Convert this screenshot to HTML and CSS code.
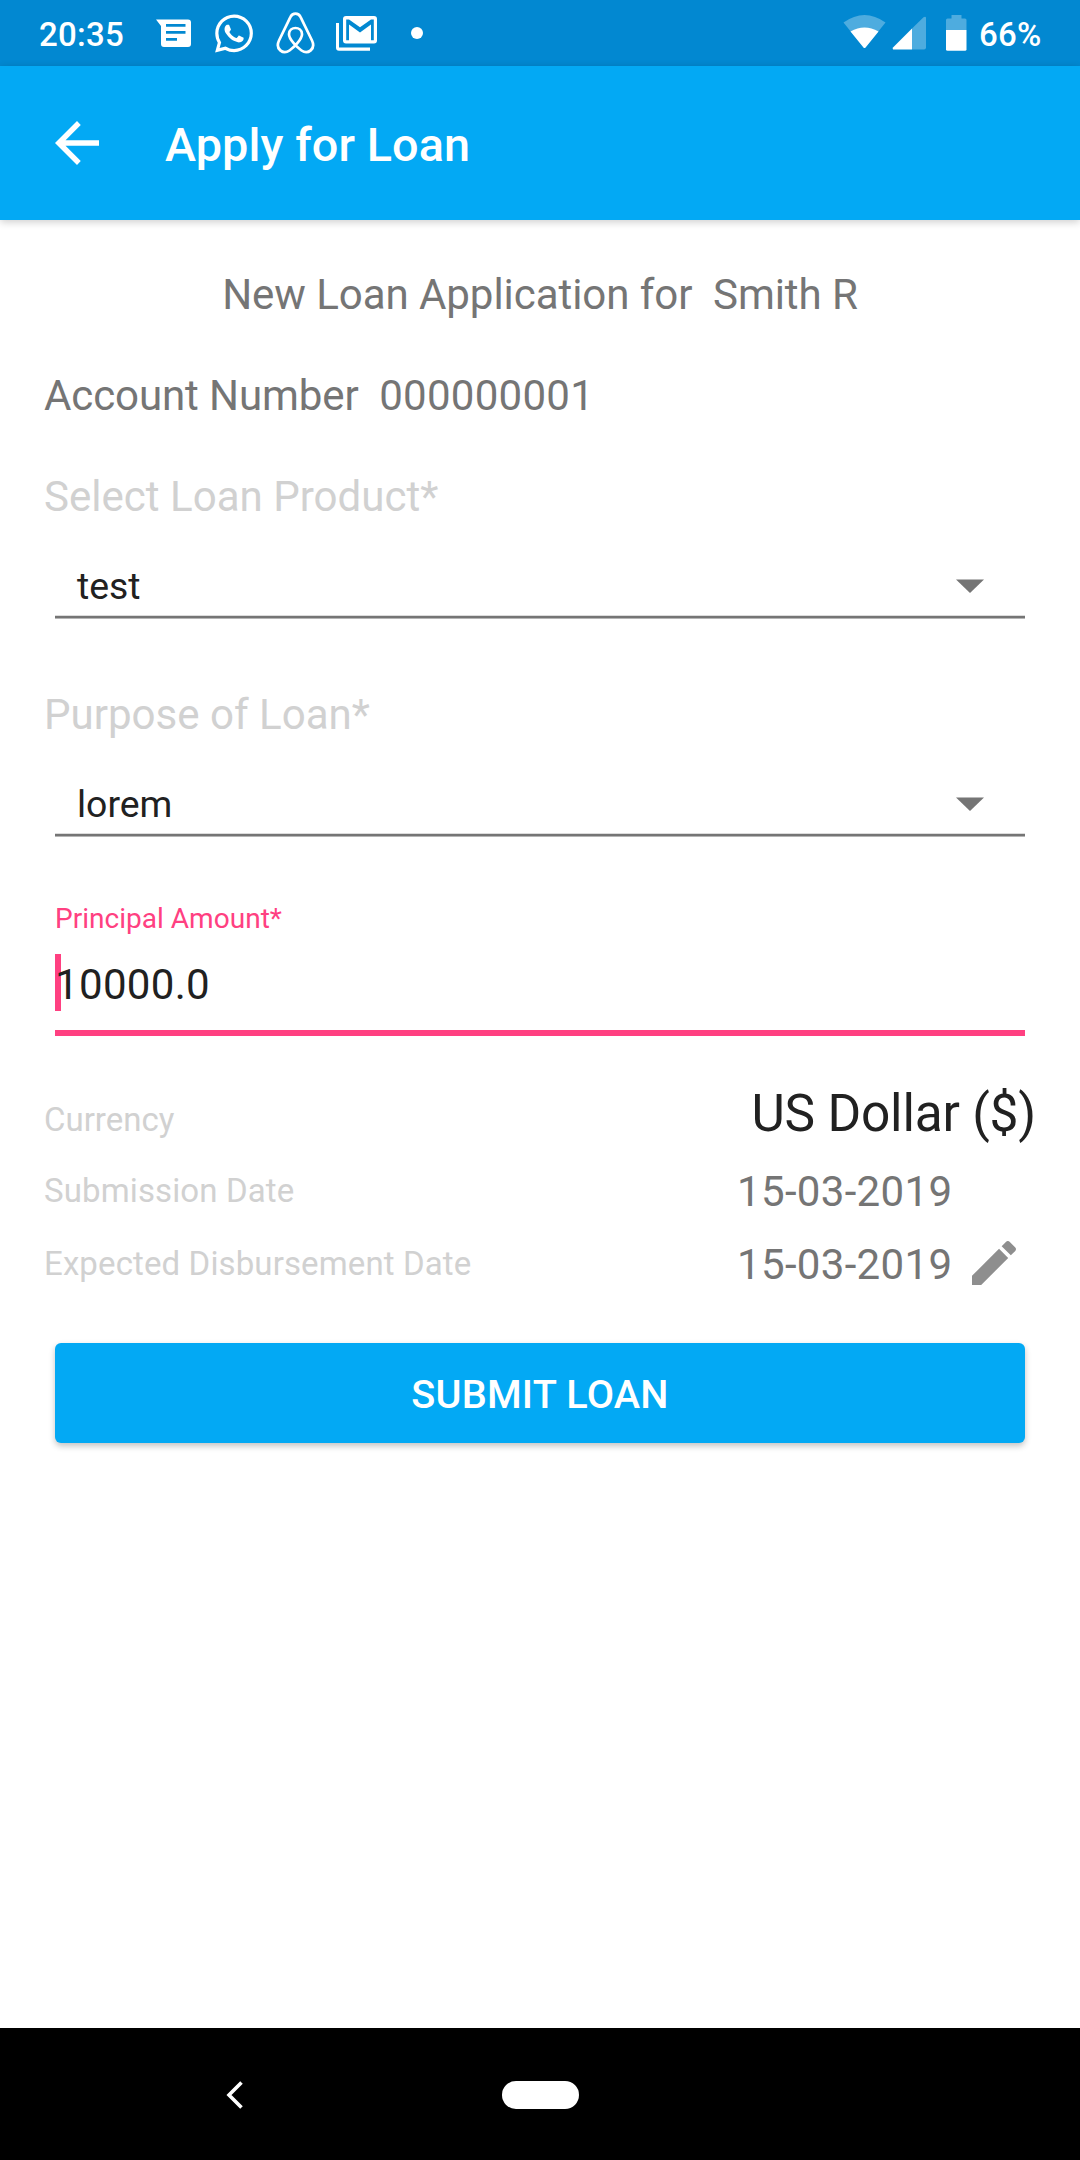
FILE: index.html
```html
<!DOCTYPE html>
<html lang="en">
<head>
<meta charset="utf-8">
<title>Apply for Loan</title>
<link rel="stylesheet" href="styles.css">
</head>
<body>
<header class="status-bar">
  <span class="clock">20:35</span>
  <svg class="icon-messages" width="35" height="28" viewBox="0 0 35 28"><path fill="#fff" fill-rule="evenodd" d="M0 0.500H32Q35 0.500 35 3.500V25Q35 28 32 28H8Q5 28 5 25V7ZM10 5V7.800H29.500V5ZM10 12V14.800H29.500V12ZM10 19V21.800H21V19Z"/></svg>
  <svg class="icon-whatsapp" width="38" height="39" viewBox="0 0 24 24"><path fill="#fff" d="M17.472 14.382c-.297-.149-1.758-.867-2.03-.967-.273-.099-.471-.148-.67.15-.197.297-.767.966-.94 1.164-.173.199-.347.223-.644.075-.297-.15-1.255-.463-2.39-1.475-.883-.788-1.48-1.761-1.653-2.059-.173-.297-.018-.458.13-.606.134-.133.298-.347.446-.52.149-.174.198-.298.298-.497.099-.198.05-.371-.025-.52-.075-.149-.669-1.612-.916-2.207-.242-.579-.487-.5-.669-.51-.173-.008-.371-.01-.57-.01-.198 0-.52.074-.792.372-.272.297-1.04 1.016-1.04 2.479 0 1.462 1.065 2.875 1.213 3.074.149.198 2.096 3.2 5.077 4.487.709.306 1.262.489 1.694.625.712.227 1.36.195 1.871.118.571-.085 1.758-.719 2.006-1.413.248-.694.248-1.289.173-1.413-.074-.124-.272-.198-.57-.347m-5.421 7.403h-.004a9.87 9.87 0 01-5.031-1.378l-.361-.214-3.741.982.998-3.648-.235-.374a9.86 9.86 0 01-1.51-5.26c.001-5.45 4.436-9.884 9.888-9.884 2.64 0 5.122 1.03 6.988 2.898a9.825 9.825 0 012.893 6.994c-.003 5.45-4.437 9.884-9.885 9.884m8.413-18.297A11.815 11.815 0 0012.05 0C5.495 0 .16 5.335.157 11.892c0 2.096.547 4.142 1.588 5.945L.057 24l6.305-1.654a11.882 11.882 0 005.683 1.448h.005c6.554 0 11.89-5.335 11.893-11.893a11.821 11.821 0 00-3.48-8.413Z"/></svg>
  <svg class="icon-airbnb" width="39" height="42" viewBox="0 0 39 42"><path fill="none" stroke="#fff" stroke-width="2.700" d="M19.500 1.600C22 1.600 23.500 2.700 24.500 4.900L36 28.500C40 37 32 43 25.500 38.500C22 36 12.800 27.500 13 22C13.200 14 25.800 14 26 22C26.200 27.500 17 36 13.500 38.500C7 43-1 37 3 28.500L14.500 4.900C15.500 2.700 17 1.600 19.500 1.600Z"/></svg>
  <svg class="icon-gmail" width="41" height="35" viewBox="0 0 41 35"><path fill="#fff" fill-rule="evenodd" d="M0 7H3V31.500H34V34.700H3Q0 34.700 0 31.700ZM10 0H38Q41 0 41 3V24.600Q41 27.600 38 27.600H10Q7 27.600 7 24.600V3Q7 0 10 0ZM10.200 24.300H13V8.500L24 16.500L35 8.500V24.300H37.800V3.500H35L24 11.200L13 3.500H10.200Z"/></svg>
  <span class="more-dot"></span>
  <span class="spacer"></span>
  <svg class="icon-wifi" width="43" height="34" viewBox="0 0 43 34"><path fill="#fff" fill-opacity=".3" d="M0.500 7.500Q21.500-7.500 42.500 7.500L22.500 32.500Q21.500 33.700 20.500 32.500Z"/><path fill="#fff" d="M7.500 16.500Q21.500 8.500 35.500 16.500L22.500 32.500Q21.500 33.700 20.500 32.500Z"/></svg>
  <svg class="icon-signal" width="34" height="34" viewBox="0 0 34 34"><path fill="#fff" fill-opacity=".3" d="M20 12.500L31.500 1.200Q34 0 34 2V31.500Q34 33.500 32 33.500H20Z"/><path fill="#fff" d="M20 12.500V33.500H2Q0 33.500 1 31.500Z"/></svg>
  <svg class="icon-battery" width="21" height="36" viewBox="0 0 21 36"><path fill="#fff" fill-opacity=".3" d="M0 15V5Q0 3.500 1.500 3.500H5.500V0H15.500V3.500H19Q20.500 3.500 20.500 5V15Z"/><path fill="#fff" d="M0 15H20.500V34.300Q20.500 35.800 19 35.800H1.500Q0 35.800 0 34.300Z"/></svg>
  <span class="battery-level">66%</span>
</header>

<nav class="app-bar">
  <svg class="icon-back" width="44" height="44" viewBox="0 0 24 24"><path fill="#fff" d="M24 10.500H5.750L14.050 2.130L12 0L0 12L12 24L14.050 21.870L5.750 13.500H24Z"/></svg>
  <h1 class="title">Apply for Loan</h1>
</nav>

<main class="form">
  <p class="heading">New Loan Application for&nbsp; Smith R</p>
  <p class="account">Account Number&nbsp; <span class="account-number">000000001</span></p>

  <label class="field-label product-label">Select Loan Product*</label>
  <div class="spinner">
    <span class="spinner-value">test</span>
    <svg class="caret" width="28" height="14" viewBox="0 0 28 14"><path fill="#757575" d="M0 .400H28L14 14Z"/></svg>
  </div>

  <label class="field-label purpose-label">Purpose of Loan*</label>
  <div class="spinner">
    <span class="spinner-value">lorem</span>
    <svg class="caret" width="28" height="14" viewBox="0 0 28 14"><path fill="#757575" d="M0 .400H28L14 14Z"/></svg>
  </div>

  <div class="amount">
    <label class="amount-label">Principal Amount*</label>
    <div class="amount-input">10000.0</div>
  </div>

  <div class="row currency-row"><span class="row-label">Currency</span><span class="currency">US Dollar ($)</span></div>
  <div class="row submission-row"><span class="row-label">Submission Date</span><span class="date">15-03-2019</span></div>
  <div class="row disbursement-row"><span class="row-label">Expected Disbursement Date</span><span class="date">15-03-2019</span>
    <svg class="icon-edit" width="44" height="44" viewBox="3 3 18 18"><path fill="#8e8e8e" d="M3 17.250V21h3.750L17.810 9.940l-3.750-3.750L3 17.250zM20.710 7.040c.390-.390.390-1.020 0-1.410l-2.340-2.340c-.390-.390-1.020-.390-1.410 0l-1.830 1.830 3.750 3.750 1.830-1.830z"/></svg>
  </div>

  <button class="submit">SUBMIT LOAN</button>
</main>

<footer class="nav-bar">
  <svg class="nav-back" width="18" height="28" viewBox="0 0 18 28"><path fill="none" stroke="#fff" stroke-width="3.600" d="M15.500 1.500L3 14L15.500 26.500"/></svg>
  <span class="nav-home"></span>
</footer>
</body>
</html>
```
FILE: styles.css
```css
* { box-sizing: border-box; }

body {
  margin: 0;
  width: 1080px;
  height: 2160px;
  display: flex;
  flex-direction: column;
  background: #fff;
  font-family: Roboto, "Liberation Sans", sans-serif;
  color: #757575;
  overflow: hidden;
}

p, h1 { margin: 0; font-weight: 400; }
svg { display: block; flex: none; }

.status-bar {
  height: 66px;
  flex: none;
  display: flex;
  align-items: flex-start;
  padding: 0 40px 0 39px;
  background: #0288d1;
  color: #fff;
}
.clock, .battery-level {
  font-size: 33px;
  font-weight: 500;
  line-height: 40px;
  padding-top: 15px;
  letter-spacing: .25px;
}
.clock { width: 117px; }
.icon-messages { margin-top: 19px; }
.icon-whatsapp { margin: 14px 0 0 24px; }
.icon-airbnb { margin: 12px 0 0 23px; }
.icon-gmail { margin: 16px 0 0 21px; }
.more-dot {
  width: 12px;
  height: 12px;
  margin: 27px 0 0 34px;
  border-radius: 50%;
  background: #fff;
}
.spacer { flex: 1; }
.icon-wifi { margin-top: 15px; }
.icon-signal { margin: 16px 0 0 6px; }
.icon-battery { margin: 15px 0 0 20px; }
.battery-level { width: 61px; margin-left: 12px; white-space: nowrap; }

.app-bar {
  height: 154px;
  flex: none;
  display: flex;
  align-items: center;
  padding-left: 55px;
  background: #03a9f4;
  box-shadow: 0 2px 8px rgba(0, 0, 0, .2);
}
.title {
  margin: 4px 0 0 66px;
  font-size: 46.750px;
  font-weight: 500;
  line-height: 56px;
  letter-spacing: .1px;
  color: #fff;
}

.form {
  flex: 1;
  display: flex;
  flex-direction: column;
  padding: 50px 44px 0;
  font-size: 42.075px;
  line-height: 50px;
}
.heading { text-align: center; letter-spacing: -.08px; }
.account { margin-top: 51px; letter-spacing: -.13px; }
.account-number { letter-spacing: .25px; }
.field-label { color: #d1d1d1; }
.product-label { margin-top: 51px; }
.purpose-label { margin-top: 71px; }

.spinner {
  display: flex;
  align-items: center;
  justify-content: space-between;
  height: 74px;
  margin: 23px 11px 0;
  padding: 8px 41px 0 22px;
  background: linear-gradient(#dcdcdc 1px, #757575 1px 3px, #b5b5b5 3px) bottom / 100% 4px no-repeat;
}
.spinner-value { font-size: 37.400px; color: #212121; }

.amount {
  margin: 65px 11px 0;
  height: 134px;
  border-bottom: 6px solid #ff4081;
}
.amount-label {
  display: block;
  font-size: 28.050px;
  line-height: 34px;
  color: #ff4081;
}
.amount-input {
  height: 57px;
  margin-top: 18px;
  padding-top: 6px;
  letter-spacing: .3px;
  color: #212121;
  background: linear-gradient(#ff4081, #ff4081) left / 6px 100% no-repeat;
}

.row { display: flex; align-items: flex-start; }
.row-label {
  width: 693px;
  flex: none;
  font-size: 33px;
  line-height: 40px;
  letter-spacing: .12px;
  color: #d1d1d1;
}
.currency-row { margin-top: 48px; height: 66px; justify-content: space-between; }
.currency-row .row-label { width: auto; margin-top: 16px; letter-spacing: 0; }
.currency { font-size: 51.425px; line-height: 60px; letter-spacing: -.2px; color: #212121; }
.date { letter-spacing: .3px; }
.submission-row { height: 73px; }
.submission-row, .disbursement-row { padding-top: 17px; }
.submission-row .row-label, .disbursement-row .row-label { margin-top: 4px; }
.disbursement-row { height: 90px; }
.icon-edit { margin: 1px 0 0 20px; }

.submit {
  flex: none;
  height: 100px;
  margin: 30px 11px 0;
  padding: 4px 0 0;
  border: 0;
  border-radius: 6px;
  background: #03a9f4;
  box-shadow: 0 3px 6px rgba(0, 0, 0, .24);
  color: #fff;
  font: 500 39.700px/48px Roboto, "Liberation Sans", sans-serif;
  letter-spacing: .2px;
}

.nav-bar {
  height: 132px;
  flex: none;
  display: flex;
  align-items: center;
  padding: 1px 0 0 226px;
  background: #000;
}
.nav-home {
  width: 77px;
  height: 28px;
  margin-left: 258px;
  border-radius: 14px;
  background: #fff;
}
```
